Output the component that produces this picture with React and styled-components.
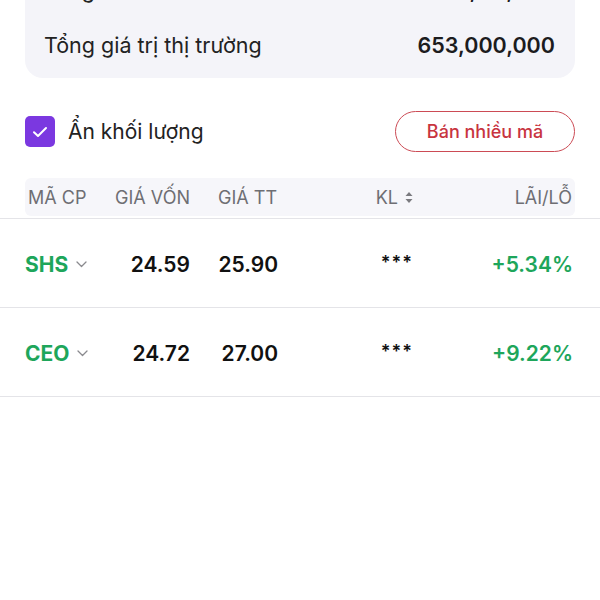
import React from 'react';
import styled, { createGlobalStyle } from 'styled-components';

const Global = createGlobalStyle`
  body {
    margin: 0;
    background: #ffffff;
    font-family: Inter, "Noto Sans", sans-serif;
    color: #1c1c1e;
  }
`;

const Page = styled.div`
  width: 600px;
  height: 600px;
  overflow: hidden;
  background: #fff;
`;

const Card = styled.div`
  margin: -38px 25px 0;
  padding: 0 20px 6px 19px;
  background: #f4f4f9;
  border-radius: 18px;
`;

const SummaryRow = styled.div`
  display: flex;
  align-items: center;
  justify-content: space-between;
  height: 55px;
  font-size: 21.5px;
`;

const Label = styled.span`
  display: flex;
  align-items: center;
  gap: 10px;
  color: #222;
`;

const Amount = styled.span`
  font-weight: 600;
  color: #1c1c1e;
`;

const Toolbar = styled.div`
  display: flex;
  align-items: center;
  justify-content: space-between;
  height: 41px;
  margin-top: 33px;
  padding: 0 25px;
`;

const CheckLabel = styled.label`
  display: flex;
  align-items: center;
  gap: 13px;
  font-size: 21px;
  color: #222;
`;

const Box = styled.span`
  display: flex;
  align-items: center;
  justify-content: center;
  width: 30px;
  height: 31px;
  border-radius: 5px;
  background: #7b38e0;
`;

const SellButton = styled.button`
  width: 180px;
  height: 41px;
  border: 1.5px solid #cc4b55;
  border-radius: 21px;
  background: #fff;
  color: #c8343f;
  font-family: Inter, "Noto Sans", sans-serif;
  font-size: 18px;
  font-weight: 500;
`;

const HeadWrap = styled.div`
  margin-top: 26px;
  padding-bottom: 2px;
  border-bottom: 1px solid #e4e4e8;
`;

const Head = styled.div`
  display: grid;
  grid-template-columns: 72px 90px 87px 136px 1fr;
  align-items: center;
  height: 38px;
  margin: 0 25px;
  padding: 0 3px;
  background: #f6f6fa;
  border-radius: 6px;
  font-size: 18px;
  color: #6e6e73;
`;

const HeadCell = styled.span`
  display: flex;
  align-items: center;
  gap: 7px;
  justify-content: ${({ left }) => (left ? 'flex-start' : 'flex-end')};
`;

const Row = styled.div`
  display: grid;
  grid-template-columns: 75px 90px 88px 135px 1fr;
  align-items: center;
  height: 86px;
  padding: 2px 27px 0 25px;
  border-bottom: 1px solid #e4e4e8;
  font-size: 21px;
  font-weight: 600;
`;

const Code = styled.span`
  display: flex;
  align-items: center;
  gap: 8px;
  color: #1ea65b;
  font-weight: 700;
`;

const Num = styled.span`
  text-align: right;
  color: ${({ up }) => (up ? '#1ea65b' : '#111')};
`;

const Stars = styled.span`
  text-align: right;
  font-size: 18px;
  letter-spacing: 1px;
  color: #111;
  transform: translateY(-2px);
`;

const Info = () => (
  <svg width="16" height="16" viewBox="0 0 16 16">
    <circle cx="8" cy="8" r="7" fill="none" stroke="#8e8e93" strokeWidth="1.6" />
    <path d="M8 7v4.5M8 4.5v.5" stroke="#8e8e93" strokeWidth="1.6" strokeLinecap="round" />
  </svg>
);

const Check = () => (
  <svg width="16" height="12" viewBox="0 0 16 12">
    <path d="M2 6.2l4 3.8 8-8" fill="none" stroke="#fff" strokeWidth="2" strokeLinecap="round" strokeLinejoin="round" />
  </svg>
);

const Chevron = () => (
  <svg width="11" height="7" viewBox="0 0 11 7">
    <path d="M1 1l4.5 4.5L10 1" fill="none" stroke="#8a8a8e" strokeWidth="1.3" strokeLinecap="round" strokeLinejoin="round" />
  </svg>
);

const Sort = () => (
  <svg width="8" height="13" viewBox="0 0 8 13">
    <path d="M4 1L7.5 5h-7zM4 12L.5 8h7z" fill="#7a7a7f" />
  </svg>
);

const holdings = [
  { code: 'SHS', cost: '24.59', price: '25.90', pnl: '+5.34%' },
  { code: 'CEO', cost: '24.72', price: '27.00', pnl: '+9.22%' },
];

export default function App() {
  return (
    <Page>
      <Global />
      <Card>
        <SummaryRow>
          <Label>
            Tổng vốn
            <Info />
          </Label>
          <Amount>617,110,000</Amount>
        </SummaryRow>
        <SummaryRow>
          <Label>Tổng giá trị thị trường</Label>
          <Amount>653,000,000</Amount>
        </SummaryRow>
      </Card>

      <Toolbar>
        <CheckLabel>
          <Box>
            <Check />
          </Box>
          Ẩn khối lượng
        </CheckLabel>
        <SellButton>Bán nhiều mã</SellButton>
      </Toolbar>

      <HeadWrap>
        <Head>
          <HeadCell left>MÃ CP</HeadCell>
          <HeadCell>GIÁ VỐN</HeadCell>
          <HeadCell>GIÁ TT</HeadCell>
          <HeadCell>
            KL <Sort />
          </HeadCell>
          <HeadCell>LÃI/LỖ</HeadCell>
        </Head>
      </HeadWrap>

      {holdings.map((h) => (
        <Row key={h.code}>
          <Code>
            {h.code}
            <Chevron />
          </Code>
          <Num>{h.cost}</Num>
          <Num>{h.price}</Num>
          <Stars>***</Stars>
          <Num up>{h.pnl}</Num>
        </Row>
      ))}
    </Page>
  );
}
